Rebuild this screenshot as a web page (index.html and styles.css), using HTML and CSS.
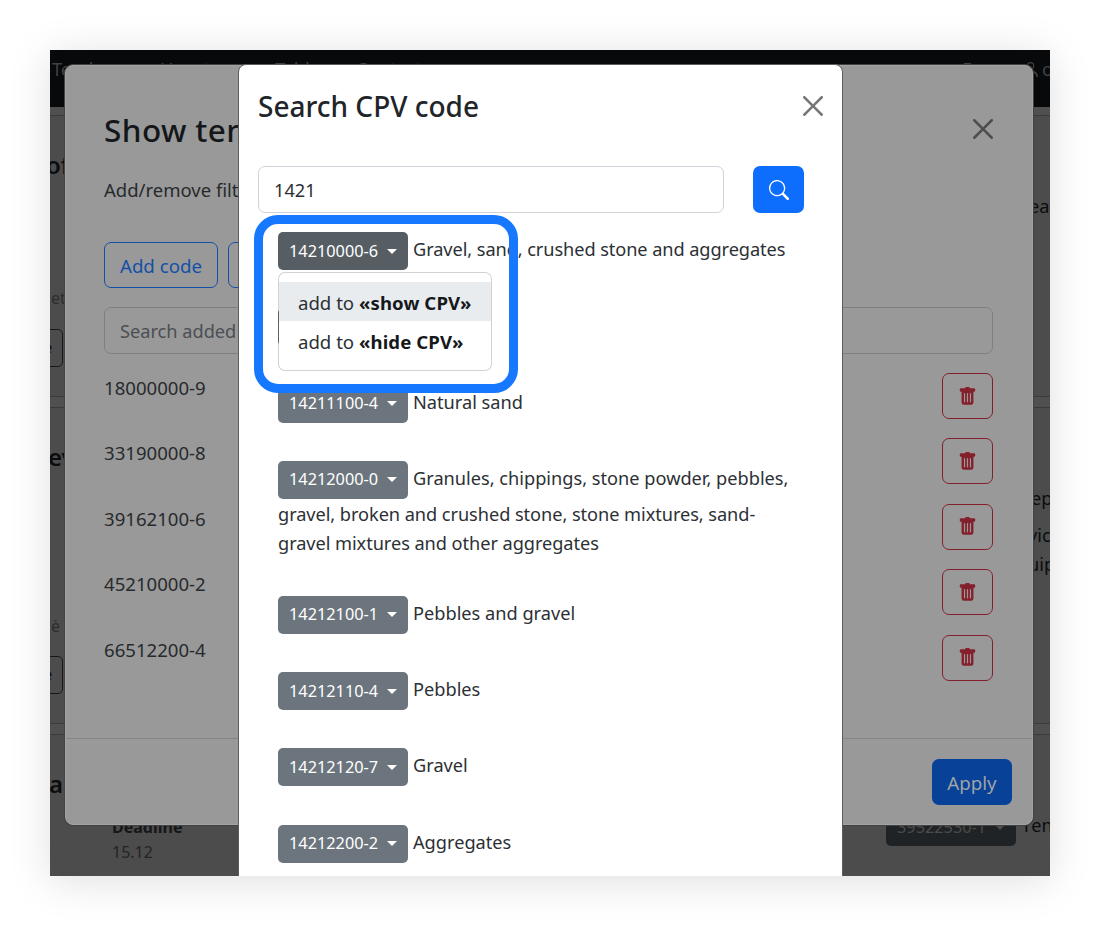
FILE: index.html
```html
<!DOCTYPE html>
<html lang="en">
<head>
<meta charset="utf-8">
<title>Search CPV code</title>
<link rel="stylesheet" href="styles.css">
</head>
<body>
<svg width="0" height="0" class="defs" aria-hidden="true">
  <symbol id="trash" viewBox="0 0 16 16"><path d="M2.5 1a1 1 0 0 0-1 1v1a1 1 0 0 0 1 1H3v9a2 2 0 0 0 2 2h6a2 2 0 0 0 2-2V4h.5a1 1 0 0 0 1-1V2a1 1 0 0 0-1-1H10a1 1 0 0 0-1-1H7a1 1 0 0 0-1 1H2.5zm3 4a.5.5 0 0 1 .5.5v7a.5.5 0 0 1-1 0v-7a.5.5 0 0 1 .5-.5zM8 5a.5.5 0 0 1 .5.5v7a.5.5 0 0 1-1 0v-7A.5.5 0 0 1 8 5zm3 .5v7a.5.5 0 0 1-1 0v-7a.5.5 0 0 1 1 0z"/></symbol>
  <symbol id="close" viewBox="0 0 16 16"><path d="M.293.293a1 1 0 0 1 1.414 0L8 6.586 14.293.293a1 1 0 1 1 1.414 1.414L9.414 8l6.293 6.293a1 1 0 0 1-1.414 1.414L8 9.414l-6.293 6.293a1 1 0 0 1-1.414-1.414L6.586 8 .293 1.707a1 1 0 0 1 0-1.414z"/></symbol>
</svg>
<main class="stage">
  <div class="page">
    <nav class="topbar">
      <span class="nav-a">Tenders</span><span class="nav-b">How to</span><span class="nav-c">Tables</span><span class="nav-d">Contacts</span><span class="nav-e">En</span>
      <svg class="person" viewBox="0 0 16 16"><path d="M8 8a3.5 3.5 0 1 0 0-7 3.5 3.5 0 0 0 0 7zm0-1a2.500 2.500 0 1 1 0-5 2.500 2.500 0 0 1 0 5zM1 15c0-4 3-6 7-6s7 2 7 6h-1.500c0-3-2.500-4.700-5.500-4.700S2.500 12 2.500 15z"/></svg>
      <span class="nav-f">o</span>
    </nav>
    <section class="card card-1">
      <div class="side"><b class="h of">of</b><span class="muted et">et</span><span class="tag">e</span></div>
      <div class="side right"><span class="ea">ea</span></div>
    </section>
    <section class="card card-2">
      <div class="side"><b class="h ev">ev</b><span class="muted ne">ė</span><span class="tag tag-2">e</span></div>
      <div class="side right"><span class="ep">ep</span><span class="vic">vic</span><span class="uip">uip</span></div>
    </section>
    <section class="card card-3">
      <b class="h a">a</b>
      <div class="deadline"><b>Deadline</b><span>15.12</span></div>
      <div class="code-dark"><span>39522530-1</span><i class="caret"></i></div>
      <span class="ren">ren</span>
    </section>
  </div>

  <section class="modal filter">
    <header class="filter-head"><h2>Show ten</h2><svg class="x"><use href="#close"/></svg></header>
    <p class="lead">Add/remove filt</p>
    <div class="actions"><span class="outline">Add code</span><span class="outline"></span></div>
    <div class="field">Search added</div>
    <ul class="codes">
      <li><span>18000000-9</span><span class="del"><svg><use href="#trash"/></svg></span></li>
      <li><span>33190000-8</span><span class="del"><svg><use href="#trash"/></svg></span></li>
      <li><span>39162100-6</span><span class="del"><svg><use href="#trash"/></svg></span></li>
      <li><span>45210000-2</span><span class="del"><svg><use href="#trash"/></svg></span></li>
      <li><span>66512200-4</span><span class="del"><svg><use href="#trash"/></svg></span></li>
    </ul>
    <footer class="filter-foot"><span class="apply">Apply</span></footer>
  </section>

  <section class="modal search">
    <header class="search-head"><h1>Search CPV code</h1><svg class="x"><use href="#close"/></svg></header>
    <div class="search-row">
      <div class="query">1421</div>
      <div class="go"><svg viewBox="0 0 16 16"><path d="M11.742 10.344a6.500 6.500 0 1 0-1.397 1.398h-.001c.03.04.062.078.098.115l3.850 3.850a1 1 0 0 0 1.415-1.414l-3.850-3.850a1.007 1.007 0 0 0-.115-.1zM12 6.500a5.500 5.500 0 1 1-11 0 5.500 5.500 0 0 1 11 0z"/></svg></div>
    </div>
    <div class="results">
      <div class="row"><span class="code active"><span>14210000-6</span><i class="caret"></i></span><span class="t1">Gravel, sand, crushed stone and aggregates</span></div>
      <div class="row"><span class="code"></span></div>
      <div class="row"><span class="code"><span>14211100-4</span><i class="caret"></i></span><span>Natural sand</span></div>
      <div class="row tall"><span class="code"><span>14212000-0</span><i class="caret"></i></span><span class="t2">Granules, chippings, stone powder, pebbles,</span><br><span class="t3">gravel, broken and crushed stone, stone mixtures, sand-</span><br><span class="t3">gravel mixtures and other aggregates</span></div>
      <div class="row"><span class="code"><span>14212100-1</span><i class="caret"></i></span><span>Pebbles and gravel</span></div>
      <div class="row"><span class="code"><span>14212110-4</span><i class="caret"></i></span><span>Pebbles</span></div>
      <div class="row"><span class="code"><span>14212120-7</span><i class="caret"></i></span><span>Gravel</span></div>
      <div class="row"><span class="code"><span>14212200-2</span><i class="caret"></i></span><span>Aggregates</span></div>
      <div class="menu">
        <div class="item hover">add to <b>«show CPV»</b></div>
        <div class="item">add to <b>«hide CPV»</b></div>
      </div>
      <div class="highlight"></div>
    </div>
  </section>
</main>
</body>
</html>
```
FILE: styles.css
```css
* { box-sizing: border-box; }
body {
  margin: 0;
  padding: 50px;
  width: 1100px;
  height: 926px;
  overflow: hidden;
  background: #fff;
  font-family: "Noto Sans", "Open Sans", sans-serif;
  font-size: 18.2px;
  line-height: 29px;
  color: #2c3034;
}
.defs { position: absolute; }
h1, h2, p, ul { margin: 0; padding: 0; }
svg { display: block; fill: currentColor; }
.stage {
  position: relative;
  width: 1000px;
  height: 826px;
  overflow: hidden;
  background: #4c4c4c;
}
body::before {
  content: "";
  position: absolute;
  left: 50px;
  top: 50px;
  width: 1000px;
  height: 826px;
  box-shadow: 0 5px 40px rgba(0, 0, 0, .13);
}

/* page under the dialogs */
.page {
  height: 826px;
  display: flex;
  flex-direction: column;
  background: #505050;
  color: #0b0c0d;
  white-space: nowrap;
}
.topbar {
  display: flex;
  height: 57px;
  padding: 5px 0 0 2px;
  background: #08090a;
  color: #3f4142;
  font-size: 18.2px;
  flex: none;
}
.topbar span { flex: none; }
.nav-a { width: 108px; }
.nav-b { width: 115px; }
.nav-c { width: 81px; }
.nav-d { width: 606px; }
.nav-e { width: 60px; }
.person { width: 17px; height: 17px; margin-top: 6px; flex: none; }
.nav-f { margin-left: 3px; }
.card {
  display: flex;
  justify-content: space-between;
  flex: none;
  border: solid #3b3b3b;
  border-width: 1px 0;
  background: #4c4c4c;
}
.card-1 { margin-top: 8px; height: 282px; }
.card-2 { margin-top: 10px; height: 317px; }
.card-3 { margin-top: 10px; height: 150px; justify-content: flex-start; }
.side { display: flex; flex-direction: column; align-items: flex-start; }
.side > * { height: 29px; }
.right { width: 20px; }
.h { font-size: 24px; font-weight: 600; }
.of { margin: 34px 0 0 -4px; }
.ev { margin: 34px 0 0 -2px; }
.a { flex: none; margin: 34px 0 0 -1px; width: 63px; }
.muted { font-size: 16px; color: #2b2d2f; }
.et { margin: 105px 0 0 1px; }
.ne { margin: 141px 0 0 1px; }
.side > .tag {
  width: 23px;
  height: 38px;
  margin: 16px 0 0 -10px;
  padding: 3px 0 0 2px;
  border: 1px solid #16181a;
  border-radius: 5px;
  font-size: 16.300px;
}
.side > .tag-2 { margin-top: 15px; }
.ea { margin: 76px 0 0 -1px; }
.ep { margin: 76px 0 0 1px; }
.vic { margin: 8px 0 0 -2px; }
.uip { margin-left: -2px; }
.deadline {
  display: flex;
  flex-direction: column;
  flex: none;
  width: 774px;
  margin-top: 80px;
  font-size: 16px;
  line-height: 25px;
  color: #222426;
}
.deadline b { font-weight: 700; color: #151719; }
.code-dark {
  display: flex;
  flex: none;
  align-items: center;
  justify-content: space-between;
  width: 130px;
  height: 37px;
  margin-top: 74px;
  padding: 0 11px;
  border-radius: 5px;
  background: #202325;
  color: #4c4c4c;
  font-size: 16.300px;
}
.ren { margin: 76px 0 0 8px; }

/* dialogs */
.modal { position: absolute; top: 15px; border-radius: 8px; }
.x { width: 20px; height: 20px; }
.filter {
  left: 15px;
  width: 968px;
  height: 760px;
  padding: 0 39px 0 38px;
  border: 1px solid #a3a3a3;
  background: #999;
  color: #272a2d;
  box-shadow: 0 0 0 1px #424242;
  white-space: nowrap;
}
.filter-head { display: flex; justify-content: space-between; padding: 42px 0 0; height: 109px; }
.filter-head h2 { font-size: 31.5px; line-height: 43px; letter-spacing: .4px; color: #141719; font-weight: 500; }
.filter-head .x { margin: 11px 0 0; color: #4d4d4d; }
.lead { height: 67px; font-size: 18.500px; }
.actions { display: flex; gap: 10px; }
.outline {
  width: 114px;
  height: 46px;
  padding-top: 8px;
  border: 1px solid #1450a8;
  border-radius: 7px;
  color: #1450a8;
  font-size: 18.700px;
  text-align: center;
}
.field {
  height: 47px;
  margin-top: 19px;
  padding: 9px 15px;
  border: 1px solid #7d8082;
  border-radius: 7px;
  color: #4b4f53;
}
.codes { margin-top: 19px; list-style: none; font-size: 18.600px; }
.codes li { display: flex; justify-content: space-between; height: 65.400px; }
.del {
  display: flex;
  align-items: center;
  justify-content: center;
  width: 51px;
  height: 46px;
  border: 1px solid #84202b;
  border-radius: 7px;
  color: #84202b;
}
.del svg { width: 19px; height: 19px; }
.filter-foot {
  display: flex;
  justify-content: flex-end;
  margin: 38px -39px 0 -38px;
  padding: 20px 20px;
  border-top: 1px solid #858585;
}
.apply {
  width: 80px;
  height: 46px;
  padding-top: 9px;
  border-radius: 7px;
  background: #084198;
  color: #a0a3a6;
  font-size: 18.700px;
  text-align: center;
}
.search {
  left: 188px;
  top: 14px;
  width: 605px;
  height: 850px;
  padding: 0 18px 0 19px;
  border: 1px solid #5c5c5c;
  background: #fff;
}
.search-head { display: flex; justify-content: space-between; height: 101px; padding: 20px 1px 0 0; }
.search-head h1 { font-size: 28px; line-height: 43px; font-weight: 500; color: #212529; white-space: nowrap; }
.search-head .x { margin: 11px 0 0; color: #777; }
.search-row { display: flex; gap: 29px; }
.query {
  width: 466px;
  height: 47px;
  padding: 9px 15px;
  border: 1px solid #ced4da;
  border-radius: 7px;
}
.go {
  display: flex;
  align-items: center;
  justify-content: center;
  width: 51px;
  height: 47px;
  border-radius: 7px;
  background: #0d6efd;
  color: #fff;
}
.go svg { width: 20px; height: 20px; }
.results { position: relative; padding: 19px 0 0 20px; }
.row { height: 76.300px; white-space: nowrap; }
.tall { height: 135px; }
.tall .code { margin-bottom: 1px; }
.t1 { letter-spacing: -.08px; }
.t3 { letter-spacing: -.06px; }
.code {
  display: inline-flex;
  align-items: center;
  justify-content: space-between;
  width: 130px;
  height: 38px;
  margin-right: 5px;
  padding: 0 11px;
  border-radius: 5px;
  background: #6c757d;
  color: #fff;
  font-size: 16.300px;
  vertical-align: middle;
}
.active { background: #565e64; }
.caret { border: 5px solid transparent; border-top-color: currentColor; border-bottom: 0; }
.menu {
  position: absolute;
  left: 20px;
  top: 59px;
  width: 214px;
  height: 99px;
  padding-top: 9px;
  border: 1px solid rgba(0, 0, 0, .175);
  border-radius: 7px;
  background: #fff;
  background-clip: padding-box;
}
.item { height: 39px; padding: 6px 19px; font-size: 18.600px; white-space: nowrap; }
.item b { color: #16191c; letter-spacing: .1px; }
.hover { background: #e9ecef; }
.highlight {
  position: absolute;
  left: -4px;
  top: 2px;
  width: 264px;
  height: 178px;
  border: 9px solid #1677ff;
  border-radius: 24px;
}
```
